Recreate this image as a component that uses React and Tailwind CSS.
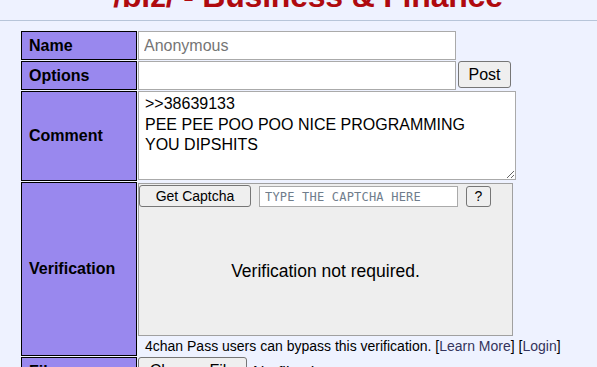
import React from "react";

const label =
  "w-[116px] shrink-0 border border-black bg-[#9988ee] pl-[7px] flex items-center font-bold text-[16px] text-black";

const btn =
  "bg-[#efefef] border border-[#767676] rounded-[3px] text-black flex items-center justify-center";

export default function App() {
  return (
    <div className="h-[367px] w-full overflow-hidden bg-[#eef2ff] font-['Liberation_Sans',Arial,sans-serif] text-black">
      {/* board title, mostly scrolled off the top */}
      <h1 className="-mt-[20px] h-[32px] pl-[19px] text-center text-[32px] leading-[32px] font-bold text-[#af0a0f] tracking-[-0.2px]">
        /biz/ - Business &amp; Finance
      </h1>
      <div className="mt-[8px] border-t border-[#b7c5d9]" />

      <div className="mt-[10px] ml-[21px] flex flex-col gap-[1px]">
        <div className="flex gap-[1px]">
          <div className={label}>Name</div>
          <input
            className="w-[318px] h-[29px] border border-[#aaa] bg-white px-[5px] text-[16px] outline-none placeholder:text-[#757575]"
            placeholder="Anonymous"
          />
        </div>

        <div className="flex gap-[1px]">
          <div className={label}>Options</div>
          <div className="flex items-start gap-[2px]">
            <input className="w-[318px] h-[29px] border border-[#aaa] bg-white px-[5px] text-[16px] outline-none" />
            <button className={`${btn} w-[53px] h-[27px] text-[16px]`}>Post</button>
          </div>
        </div>

        <div className="flex gap-[1px]">
          <div className={`${label} h-[90px]`}>Comment</div>
          <textarea
            className="w-[378px] h-[89px] border border-[#aaa] bg-white px-[6px] py-[2px] text-[16px] leading-[20.5px] outline-none"
            defaultValue={">>38639133\nPEE PEE POO POO NICE PROGRAMMING\nYOU DIPSHITS"}
          />
        </div>

        <div className="flex gap-[1px]">
          <div className={`${label} h-[174px]`}>Verification</div>
          <div className="flex flex-col">
            <div className="mt-[1px] w-[375px] h-[153px] border border-[#a0a0a0] bg-[#eeeeee] flex flex-col">
              <div className="flex items-start pt-[1px]">
                <button className={`${btn} w-[112px] h-[22px] text-[14px]`}>Get Captcha</button>
                <input
                  className="ml-[8px] mt-[1px] w-[199px] h-[21px] border border-[#aaa] bg-white px-[5px] text-[12px] tracking-[0.2px] font-['DejaVu_Sans_Mono',monospace] outline-none placeholder:text-[#6f7d8c]"
                  placeholder="TYPE THE CAPTCHA HERE"
                />
                <button className={`${btn} ml-[8px] mt-[1px] w-[25px] h-[21px] text-[14px]`}>?</button>
              </div>
              <div className="flex-1 flex items-center justify-center text-[17.5px]">
                Verification not required.
              </div>
            </div>
            <div className="pl-[7px] h-[19px] leading-[21px] text-[14px] whitespace-nowrap">
              4chan Pass users can bypass this verification. [
              <a className="text-[#34345c]">Learn More</a>] [
              <a className="text-[#34345c]">Login</a>]
            </div>
          </div>
        </div>

        <div className="flex gap-[1px]">
          <div className={`${label} h-[30px]`}>File</div>
          <div className="flex gap-[6px] h-[30px] items-start">
            <button className={`${btn} w-[109px] h-[28px] text-[16px]`}>Choose File</button>
            <span className="text-[16px] mt-[4px]">No file chosen</span>
          </div>
        </div>
      </div>
    </div>
  );
}
